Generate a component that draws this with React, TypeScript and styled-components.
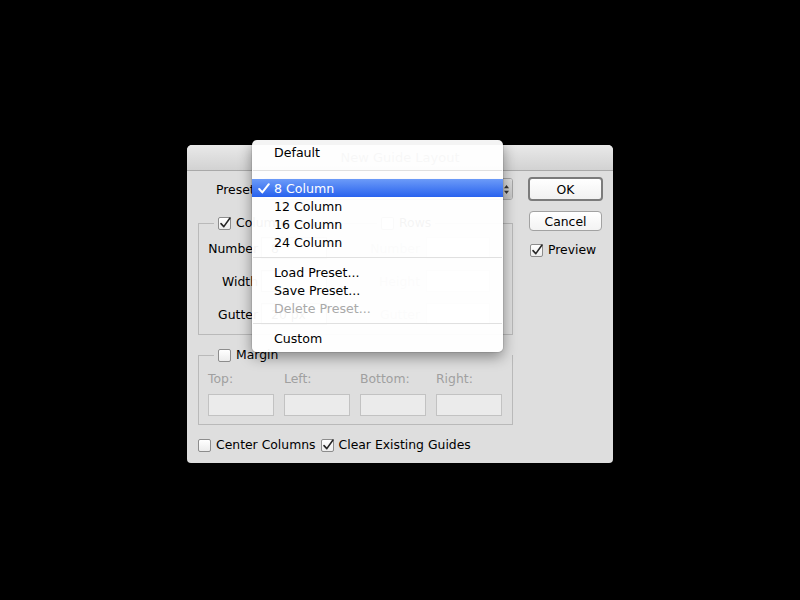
import React from 'react';
import styled, { createGlobalStyle } from 'styled-components';

const Global = createGlobalStyle`
  html, body { margin: 0; padding: 0; background: #000; }
  body { font-family: "DejaVu Sans", "Noto Sans", sans-serif; -webkit-font-smoothing: antialiased; }
  * { box-sizing: border-box; }
`;

const Screen = styled.div`
  width: 800px;
  height: 600px;
  background: #000;
  padding: 145px 0 0 187px;
`;

const Dialog = styled.div`
  position: relative;
  width: 426px;
  height: 318px;
  background: #dedede;
  border-radius: 5px 5px 4px 4px;
  display: flex;
  flex-direction: column;
  font-size: 12.4px;
  color: #000;
`;

const TitleBar = styled.div`
  height: 26px;
  flex: none;
  background: linear-gradient(#e9e9e9, #d2d2d2);
  border-bottom: 1px solid #a9a9a9;
  border-radius: 5px 5px 0 0;
  display: flex;
  align-items: center;
  justify-content: center;
  font-size: 13px;
  color: #4a4a4a;
`;

const Body = styled.div`
  display: flex;
  gap: 15px;
  padding: 6px 10px 0 11px;
`;

const LeftCol = styled.div`
  width: 315px;
  display: flex;
  flex-direction: column;
  padding-top: 1px;
`;

const RightCol = styled.div`
  width: 75px;
  display: flex;
  flex-direction: column;
  align-items: flex-start;
`;

const PresetRow = styled.div`
  height: 22px;
  display: flex;
  align-items: center;
  padding-left: 18px;
`;

const Select = styled.div`
  flex: 1;
  margin-left: 4px;
  height: 22px;
  border: 1px solid #a6a6a6;
  border-radius: 3px;
  background: linear-gradient(#ffffff, #f0f0f0);
  display: flex;
  align-items: center;
  padding-left: 8px;
  overflow: hidden;
`;

const SelectValue = styled.span`
  flex: 1;
`;

const SelectArrows = styled.span`
  width: 12px;
  height: 100%;
  border-left: 1px solid #a9a9a9;
  background: linear-gradient(#dedede, #c4c4c4);
  display: flex;
  align-items: center;
  justify-content: center;
`;

const Group = styled.div<{ $mt: number }>`
  margin-top: ${(p) => p.$mt}px;
  border: 1px solid #b9b9b9;
`;

const Halves = styled.div`
  display: flex;
`;

const Half = styled.div<{ $w?: number }>`
  ${(p) => (p.$w ? `width: ${p.$w}px;` : 'flex: 1;')}
  display: flex;
  flex-direction: column;
  padding-bottom: 9px;
`;

const Legend = styled.label<{ $ml: number }>`
  align-self: flex-start;
  margin-top: -8px;
  margin-left: ${(p) => p.$ml}px;
  height: 14px;
  padding: 0 4px;
  background: #dedede;
  display: flex;
  align-items: center;
  gap: 5px;
  line-height: 14px;
`;

const FieldGrid = styled.div<{ $lw: number; $gap: number; $fw: number }>`
  margin-top: 7px;
  display: grid;
  grid-template-columns: ${(p) => p.$lw}px ${(p) => p.$fw}px;
  column-gap: ${(p) => p.$gap}px;
  row-gap: 11px;
  align-items: center;
`;

const FieldLabel = styled.span<{ $disabled?: boolean }>`
  text-align: right;
  color: ${(p) => (p.$disabled ? '#a3a3a3' : '#000')};
  white-space: nowrap;
`;

const Field = styled.div<{ $disabled?: boolean }>`
  height: 22px;
  border: 1px solid ${(p) => (p.$disabled ? '#c2c2c2' : '#a4a4a4')};
  background: ${(p) => (p.$disabled ? '#ebebeb' : '#ffffff')};
  box-shadow: ${(p) => (p.$disabled ? 'none' : 'inset 0 1px 0 #d8d8d8')};
  display: flex;
  align-items: center;
  padding-left: 9px;
  color: #000;
`;

const MarginGrid = styled.div`
  display: grid;
  grid-template-columns: repeat(4, 66px);
  column-gap: 10px;
  row-gap: 9px;
  padding: 10px 9px 8px 9px;
`;

const MarginLabel = styled.span`
  color: #a0a0a0;
  line-height: 14px;
  margin-bottom: -1px;
`;

const BottomRow = styled.div`
  margin-top: 13px;
  display: flex;
  align-items: center;
  gap: 5px;
`;

const CheckLabel = styled.label`
  display: flex;
  align-items: center;
  gap: 5px;
  height: 14px;
  line-height: 14px;
  white-space: nowrap;
`;

const BoxWrap = styled.span`
  position: relative;
  width: 13px;
  height: 13px;
  flex: none;
  border: 1px solid #8c8c8c;
  border-radius: 2px;
  background: linear-gradient(#ffffff, #ececec);
`;

const CheckSvg = styled.svg`
  position: absolute;
  left: -1px;
  top: -2px;
  overflow: visible;
`;

const Button = styled.button<{ $default?: boolean }>`
  font-family: inherit;
  font-size: 12.4px;
  color: #000;
  padding: 0;
  border-radius: 4px;
  cursor: default;
  ${(p) =>
    p.$default
      ? `width: 75px; height: 24px; border: 2px solid #7b7b7b; background: linear-gradient(#ffffff, #f1f1f1);`
      : `width: 73px; height: 20px; margin-left: 1px; border: 1px solid #a2a2a2; background: linear-gradient(#ffffff, #f3f3f3);`}
`;

const PreviewWrap = styled.div`
  margin-top: 12px;
  margin-left: 2px;
`;

const Menu = styled.div`
  position: absolute;
  left: 65px;
  top: -5px;
  width: 251px;
  padding: 3px 0 5px;
  border-radius: 5px;
  background: rgba(255, 255, 255, 0.955);
  box-shadow: 0 5px 14px rgba(0, 0, 0, 0.4), 0 0 0 1px rgba(0, 0, 0, 0.08);
  font-size: 12.6px;
`;

const MenuItem = styled.div<{ $active?: boolean; $disabled?: boolean }>`
  height: 18px;
  display: flex;
  align-items: center;
  color: ${(p) => (p.$active ? '#fff' : p.$disabled ? '#a9a9a9' : '#000')};
  background: ${(p) => (p.$active ? 'linear-gradient(#6c9bf8, #2862ee)' : 'transparent')};
`;

const MenuCheck = styled.span`
  width: 22px;
  padding-left: 6px;
  display: flex;
  align-items: center;
`;

const Separator = styled.div<{ $h: number }>`
  height: ${(p) => p.$h}px;
  display: flex;
  align-items: center;
  padding: 0 1px;
  &::after {
    content: '';
    flex: 1;
    height: 1px;
    background: #e0e0e0;
  }
`;

function Checkbox({ checked }: { checked?: boolean }) {
  return (
    <BoxWrap>
      {checked && (
        <CheckSvg width="14" height="14" viewBox="0 0 14 14">
          <path d="M3 7.6 L5.8 10.6 L12 2" fill="none" stroke="#262626" strokeWidth="1.6" strokeLinecap="round" strokeLinejoin="round" />
        </CheckSvg>
      )}
    </BoxWrap>
  );
}

export default function App() {
  return (
    <>
      <Global />
      <Screen>
        <Dialog>
          <TitleBar>New Guide Layout</TitleBar>
          <Body>
            <LeftCol>
              <PresetRow>
                <span>Preset:</span>
                <Select>
                  <SelectValue>8 Column</SelectValue>
                  <SelectArrows>
                    <svg width="7" height="11" viewBox="0 0 7 11">
                      <path d="M3.5 1 L6 4.2 H1 Z" fill="#333" />
                      <path d="M3.5 10 L6 6.8 H1 Z" fill="#333" />
                    </svg>
                  </SelectArrows>
                </Select>
              </PresetRow>

              <Group $mt={23}>
                <Halves>
                  <Half $w={157}>
                    <Legend $ml={15}>
                      <Checkbox checked />
                      Columns
                    </Legend>
                    <FieldGrid $lw={59} $gap={3} $fw={66}>
                      <FieldLabel>Number</FieldLabel>
                      <Field>8</Field>
                      <FieldLabel>Width</FieldLabel>
                      <Field />
                      <FieldLabel>Gutter</FieldLabel>
                      <Field>20 px</Field>
                    </FieldGrid>
                  </Half>
                  <Half>
                    <Legend $ml={21}>
                      <Checkbox />
                      Rows
                    </Legend>
                    <FieldGrid $lw={64} $gap={6} $fw={64}>
                      <FieldLabel $disabled>Number</FieldLabel>
                      <Field $disabled />
                      <FieldLabel $disabled>Height</FieldLabel>
                      <Field $disabled />
                      <FieldLabel $disabled>Gutter</FieldLabel>
                      <Field $disabled />
                    </FieldGrid>
                  </Half>
                </Halves>
              </Group>

              <Group $mt={20}>
                <Legend $ml={15}>
                  <Checkbox />
                  Margin
                </Legend>
                <MarginGrid>
                  <MarginLabel>Top:</MarginLabel>
                  <MarginLabel>Left:</MarginLabel>
                  <MarginLabel>Bottom:</MarginLabel>
                  <MarginLabel>Right:</MarginLabel>
                  <Field $disabled />
                  <Field $disabled />
                  <Field $disabled />
                  <Field $disabled />
                </MarginGrid>
              </Group>

              <BottomRow>
                <CheckLabel>
                  <Checkbox />
                  Center Columns
                </CheckLabel>
                <CheckLabel>
                  <Checkbox checked />
                  Clear Existing Guides
                </CheckLabel>
              </BottomRow>
            </LeftCol>

            <RightCol>
              <Button $default>OK</Button>
              <Button style={{ marginTop: 10 }}>Cancel</Button>
              <PreviewWrap>
                <CheckLabel>
                  <Checkbox checked />
                  Preview
                </CheckLabel>
              </PreviewWrap>
            </RightCol>
          </Body>

          <Menu>
            <MenuItem>
              <MenuCheck />
              Default
            </MenuItem>
            <Separator $h={18} />
            <MenuItem $active>
              <MenuCheck>
                <svg width="12" height="11" viewBox="0 0 12 11">
                  <path d="M1.2 6 L4.3 9.4 L10.8 1.2" fill="none" stroke="#fff" strokeWidth="2" strokeLinecap="round" strokeLinejoin="round" />
                </svg>
              </MenuCheck>
              8 Column
            </MenuItem>
            <MenuItem>
              <MenuCheck />
              12 Column
            </MenuItem>
            <MenuItem>
              <MenuCheck />
              16 Column
            </MenuItem>
            <MenuItem>
              <MenuCheck />
              24 Column
            </MenuItem>
            <Separator $h={12} />
            <MenuItem>
              <MenuCheck />
              Load Preset...
            </MenuItem>
            <MenuItem>
              <MenuCheck />
              Save Preset...
            </MenuItem>
            <MenuItem $disabled>
              <MenuCheck />
              Delete Preset...
            </MenuItem>
            <Separator $h={12} />
            <MenuItem>
              <MenuCheck />
              Custom
            </MenuItem>
          </Menu>
        </Dialog>
      </Screen>
    </>
  );
}
